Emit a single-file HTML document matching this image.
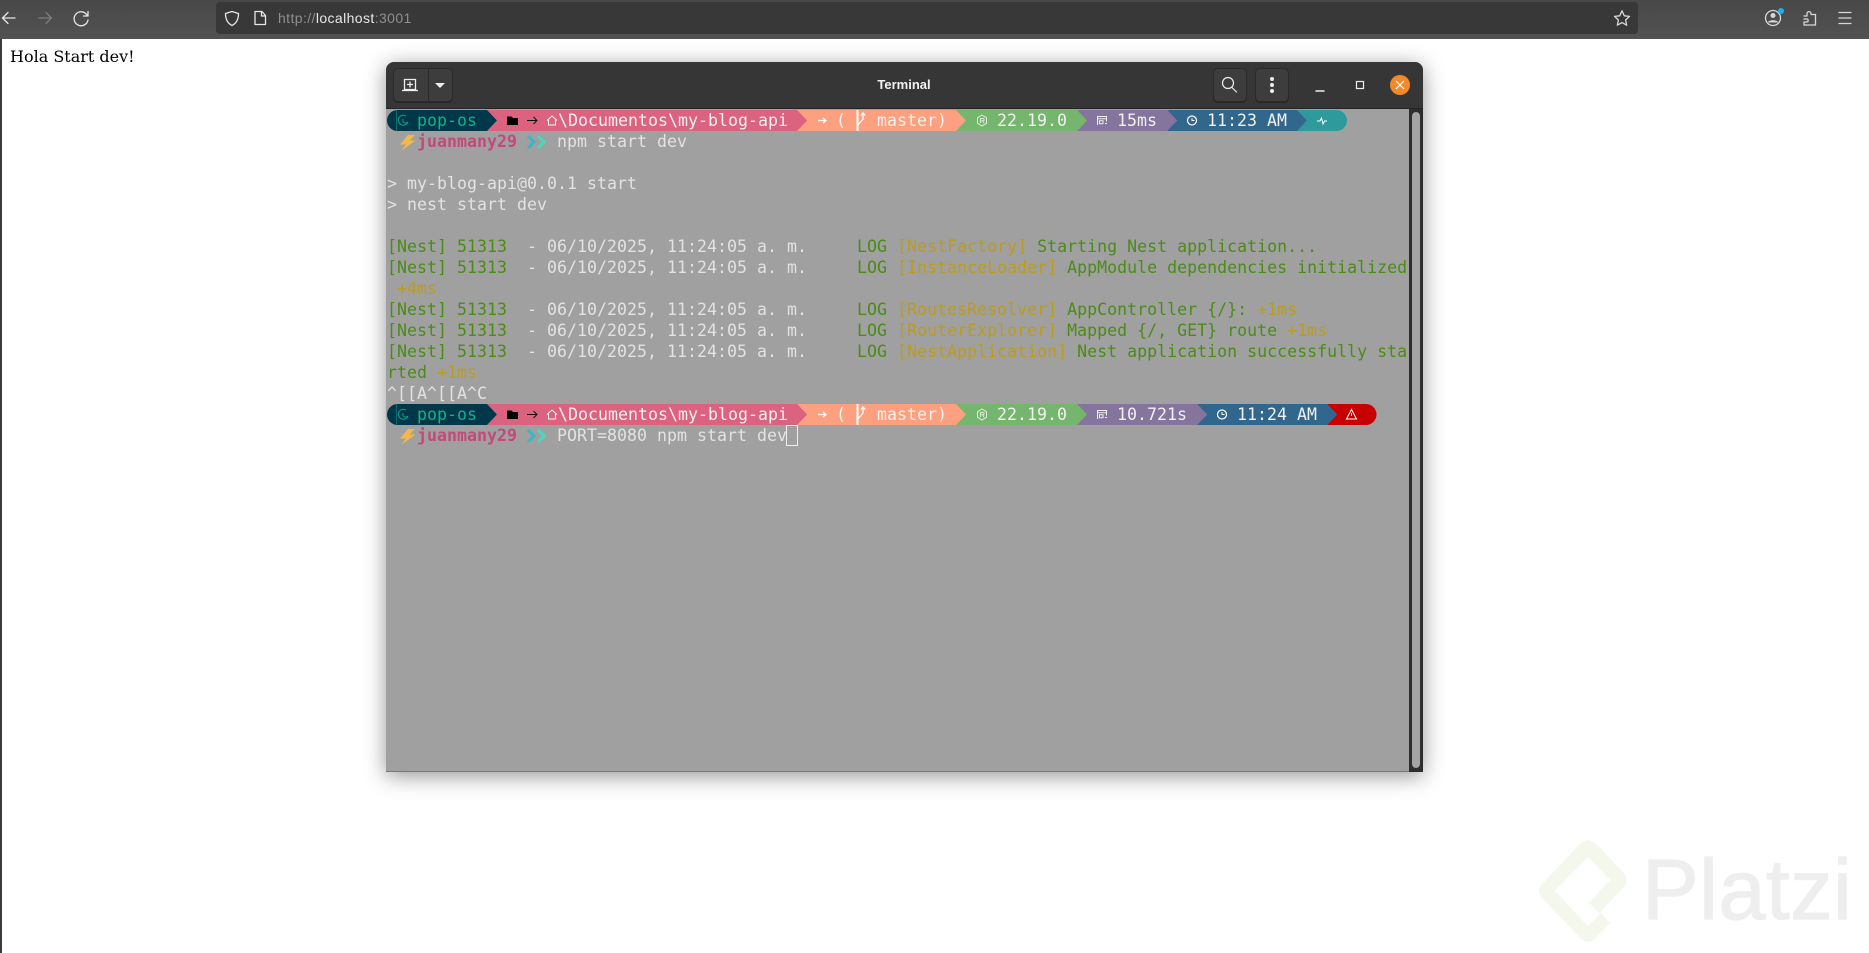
<!DOCTYPE html>
<html><head><meta charset="utf-8"><title>Hola Start dev</title>
<style>
html,body{margin:0;padding:0;width:1869px;height:953px;overflow:hidden;background:#fff}
#top{position:absolute;left:0;top:0;width:1869px;height:39px;background:linear-gradient(#484848,#525252)}
#url{position:absolute;left:216px;top:2px;width:1422px;height:32px;background:#383838;border-radius:4px}
#urlt{position:absolute;left:278px;top:9px;font:14px/18px "Liberation Sans",sans-serif;letter-spacing:.4px;color:#8f8f8f;white-space:pre}
#urlt b{font-weight:400;color:#e8e8e8}
#strip{position:absolute;left:0;top:39px;width:2px;height:914px;background:#3c3c3c}
#hola{position:absolute;left:10px;top:47px;font:16px/20px "DejaVu Serif",serif;color:#000;white-space:pre}
#win{position:absolute;left:386px;top:62px;width:1037px;height:710px;background:#a0a0a0;border-radius:8px 8px 0 0;box-shadow:0 4px 22px rgba(0,0,0,.42)}
#tb{position:absolute;left:0;top:0;width:1037px;height:46px;background:#363636;border-radius:8px 8px 0 0;border-bottom:1px solid #242424;box-sizing:content-box}
#sb{position:absolute;left:1023px;top:47px;width:14px;height:663px;background:#2e2e2e}
#th{position:absolute;left:3px;top:3px;width:8px;height:656px;background:#a3a3a3;border-radius:4px}
#bot{position:absolute;left:0;top:709px;width:1023px;height:1px;background:#777}
.btn{position:absolute;top:6px;height:34px;box-sizing:border-box;background:#3d3d3d;border:1px solid #2a2a2a;border-radius:5px;box-shadow:0 1px 0 #282828}
#title{position:absolute;left:478px;top:0;width:80px;height:46px;text-align:center;font:bold 13px/45px "Liberation Sans",sans-serif;color:#f2f2f2}
#art{position:absolute;left:0;top:0}
.r{position:absolute;left:387px;height:21px;width:1020px;overflow:hidden;font:16.58px/21px "DejaVu Sans Mono",monospace;letter-spacing:.02px;color:#e2e2e2;white-space:pre}
.g{color:#4a8c16}.y{color:#bc9c1c}
.p{color:#c4487a;font-weight:bold}
.bt{position:absolute;height:21px;font:16.58px/21px "DejaVu Sans Mono",monospace;letter-spacing:.02px;color:#f1f1f1;white-space:pre}
#mark{position:absolute;left:1642px;top:836px;font:85px/110px "Liberation Sans",sans-serif;color:#eeeeee;white-space:pre;letter-spacing:.4px;-webkit-text-stroke:1.2px #eeeeee}
</style></head><body>
<div id="top"></div><div id="url"></div>
<div id="urlt">http://<b>localhost</b>:3001</div>
<div id="strip"></div>
<div id="hola">Hola Start dev!</div>
<div id="mark">Platzi</div>
<svg style="position:absolute;left:0;top:0" width="1869" height="953">
<path fill="#f4f8ec" fill-rule="evenodd" d="M1580 844Q1588 836 1596 844L1623 872Q1631 880 1623 888L1600 912L1610 923L1596 938Q1588 946 1580 938L1543 899Q1535 891 1543 883ZM1588 857L1555 891L1588 926L1600 914L1589 903L1610 880Z"/>
</svg>
<div id="win">
 <div id="tb"></div>
 <div class="btn" style="left:7px;width:60px"></div>
 <div style="position:absolute;left:42px;top:7px;width:1px;height:32px;background:#2a2a2a"></div>
 <div class="btn" style="left:827px;width:34px"></div>
 <div class="btn" style="left:869px;width:34px"></div>
 <div id="title">Terminal</div>
 <div id="sb"><div id="th"></div></div>
 <div id="bot"></div>
</div>
<svg id="art" width="1869" height="953" fill="none">
 <!-- browser icons -->
 <g stroke="#e6e6e6" stroke-width="1.300" stroke-linecap="round" stroke-linejoin="round">
  <path d="M3 18H15M8 12.500L2.500 18L8 23.500"/>
  <path stroke="#7d7d7d" d="M39 18H51M46 12.500L51.500 18L46 23.500"/>
  <path d="M87 15A7 7 0 1 0 88 20M88 11.500V16H83.500"/>
  <path d="M232 11.500L238.500 13.500C238.500 19 237 23 232 25.500C227 23 225.500 19 225.500 13.500Z"/>
  <path d="M255 11.500H262L265.500 15.500V24.500H255ZM261.500 11.500V16H265.500"/>
  <path stroke="#d8d8d8" d="M1622 10.800L1624.300 15.800L1629.500 16.400L1625.600 20L1626.700 25.200L1622 22.600L1617.300 25.200L1618.400 20L1614.500 16.400L1619.700 15.800Z"/>
  <circle cx="1773" cy="18" r="7.500" stroke="#d8d8d8"/>
  <path stroke="#d8d8d8" d="M1804 16H1807V13.500C1807 11 1811 11 1811 13.500V14.500H1815.500V25H1804V22H1807C1808.500 22 1808.500 19 1807 19H1804"/>
  <path stroke="#d8d8d8" d="M1839 12.500H1851M1839 18H1851M1839 23.500H1851"/>
 </g>
 <circle cx="1773" cy="15.500" r="2.500" fill="#d8d8d8"/><path d="M1768 22.500C1768 19.500 1778 19.500 1778 22.500Z" fill="#d8d8d8"/>
 <circle cx="1781" cy="11" r="3" fill="#1bb0ee"/>
 <!-- terminal header icons -->
 <g stroke="#eee" stroke-width="1.300">
  <path d="M404.500 79.500H415.500V89.500H404.500ZM410 81.500V87.500M407 84.500H413"/>
  <path d="M402 90.500H418" stroke-width="1.300"/>
 </g>
 <path d="M435 83H445L440 88Z" fill="#eee"/>
 <g stroke="#eee" stroke-width="1.200" stroke-linecap="round">
  <circle cx="1228" cy="83" r="5.500"/><path d="M1232 87.500L1236.500 92"/>
  <path stroke-width="1.500" d="M1316 91H1324"/>
 </g>
 <circle cx="1272" cy="79" r="2" fill="#eee"/><circle cx="1272" cy="85" r="2" fill="#eee"/><circle cx="1272" cy="91" r="2" fill="#eee"/>
 <rect x="1356.500" y="81.500" width="7" height="7" stroke="#eee" stroke-width="1.200"/>
 <circle cx="1400" cy="85" r="10" fill="#f08a2a"/>
 <path d="M1396 81L1404 89M1404 81L1396 89" stroke="#fff" stroke-width="1.200"/>
 <!-- powerline bar 1 -->
 <g id="b1">
  <path fill="#2f9a9c" d="M1297 110H1336.500A10.500 10.500 0 0 1 1336.500 131H1297L1307 120.500Z"/>
  <path fill="#31668d" d="M1167 110H1297L1307 120.500L1297 131H1167L1177 120.500Z"/>
  <path fill="#84749e" d="M1077 110H1167L1177 120.500L1167 131H1077L1087 120.500Z"/>
  <path fill="#75b56d" d="M956 110H1077L1087 120.500L1077 131H956L966 120.500Z"/>
  <path fill="#fda07f" d="M797 110H956L966 120.500L956 131H797L807 120.500Z"/>
  <path fill="#dc6380" d="M487 110H797L807 120.500L797 131H487L497 120.500Z"/>
  <path fill="#00384a" d="M397.500 110H487L497 120.500L487 131H397.500A10.500 10.500 0 0 1 397.500 110Z"/>
 </g>
 <!-- powerline bar 2 -->
 <g id="b2">
  <path fill="#c80000" d="M1327 404H1366A10.500 10.500 0 0 1 1366 425H1327L1337 414.500Z"/>
  <path fill="#31668d" d="M1197 404H1327L1337 414.500L1327 425H1197L1207 414.500Z"/>
  <path fill="#84749e" d="M1077 404H1197L1207 414.500L1197 425H1077L1087 414.500Z"/>
  <path fill="#75b56d" d="M956 404H1077L1087 414.500L1077 425H956L966 414.500Z"/>
  <path fill="#fda07f" d="M797 404H956L966 414.500L956 425H797L807 414.500Z"/>
  <path fill="#dc6380" d="M487 404H797L807 414.500L797 425H487L497 414.500Z"/>
  <path fill="#00384a" d="M397.500 404H487L497 414.500L487 425H397.500A10.500 10.500 0 0 1 397.500 404Z"/>
 </g>
 <g id="ic1">
  <path stroke="#0d6a70" d="M396.500 110V131"/>
  <path stroke="#12a98a" stroke-width=".9" d="M406 116A5 5 0 1 0 408 122C406.500 124 402 123 403 119"/>
  <path fill="#000" d="M507 116.500H511.500L513 118H518V125H507Z"/>
  <path stroke="#111" stroke-width="1" d="M527 120.500H537M533.500 117L537 120.500L533.500 124"/>
  <path stroke="#f3f3f3" stroke-width="1" d="M547 120.500L552 116L557 120.500M548.500 120V125H555.500V120"/>
  <path stroke="#fff" stroke-width="1.200" d="M818 120.500H826M823 118L826 120.500L823 123"/>
  <path stroke="#fff" stroke-width="2" d="M857.500 110V131"/><path stroke="#fff" stroke-width="1.300" d="M858 125L863 119V113.500M860.800 115.500L863 113L865.200 115.500"/>
  <path stroke="#dff0dc" d="M982 115L986.500 117.800V123.200L982 126L977.500 123.200V117.800Z"/><path stroke="#dff0dc" stroke-width=".9" d="M980.500 123V118.500H983C984.500 118.500 984.500 120.800 983 120.800H980.500M983 121L984 123"/>
  <path stroke="#eee" d="M1097.500 125V116.500H1106.500V121.500M1097.500 118.800H1106.500M1099.500 120.800H1103V123.800H1099.500ZM1105 123.500H1107"/>
  <circle cx="1192" cy="120.500" r="4.500" stroke="#fff" stroke-width="1.200"/><path stroke="#fff" d="M1192 118V120.500H1194.500"/>
  <path stroke="#fff" d="M1317 121H1320L1321.500 118L1323 124L1324.500 121H1327"/>
 </g>
 <g id="ic2">
  <path stroke="#0d6a70" d="M396.500 404V425"/>
  <path stroke="#12a98a" stroke-width=".9" d="M406 410A5 5 0 1 0 408 416C406.500 418 402 417 403 413"/>
  <path fill="#000" d="M507 410.500H511.500L513 412H518V419H507Z"/>
  <path stroke="#111" stroke-width="1" d="M527 414.500H537M533.500 411L537 414.500L533.500 418"/>
  <path stroke="#f3f3f3" stroke-width="1" d="M547 414.500L552 410L557 414.500M548.500 414V419H555.500V414"/>
  <path stroke="#fff" stroke-width="1.200" d="M818 414.500H826M823 412L826 414.500L823 417"/>
  <path stroke="#fff" stroke-width="2" d="M857.500 404V425"/><path stroke="#fff" stroke-width="1.300" d="M858 419L863 413V407.500M860.800 409.500L863 407L865.200 409.500"/>
  <path stroke="#dff0dc" d="M982 409L986.500 411.800V417.200L982 420L977.500 417.200V411.800Z"/><path stroke="#dff0dc" stroke-width=".9" d="M980.500 417V412.500H983C984.500 412.500 984.500 414.800 983 414.800H980.500M983 415L984 417"/>
  <path stroke="#eee" d="M1097.500 419V410.500H1106.500V415.500M1097.500 412.800H1106.500M1099.500 414.800H1103V417.800H1099.500ZM1105 417.500H1107"/>
  <circle cx="1222" cy="414.500" r="4.500" stroke="#fff" stroke-width="1.200"/><path stroke="#fff" d="M1222 412V414.500H1224.500"/>
  <path stroke="#fff" d="M1351.500 409.500L1356.500 419H1346.500Z"/><path stroke="#fff" d="M1351.500 413V416"/>
 </g>
 <path fill="#f2b84a" d="M408 135H415L409.500 140.500H415.500L401 151L406 144.500H400Z"/>
 <path fill="#f2b84a" d="M408 429H415L409.500 434.500H415.500L401 445L406 438.500H400Z"/>
 <g stroke-width="3">
  <path stroke="#3db5c8" d="M528 136L534 142L528 148"/><path stroke="#47d8be" d="M538 136L544 142L538 148"/>
  <path stroke="#3db5c8" d="M528 430L534 436L528 442"/><path stroke="#47d8be" d="M538 430L544 436L538 442"/>
 </g>
 <rect x="786.500" y="425.500" width="11" height="20" stroke="#f0f0f0"/>
</svg>
<!-- bar text -->
<div class="bt" style="left:417px;top:110px;color:#0cb38c">pop-os</div>
<div class="bt" style="left:558px;top:110px">\Documentos\my-blog-api</div>
<div class="bt" style="left:836px;top:110px">(</div>
<div class="bt" style="left:877px;top:110px">master)</div>
<div class="bt" style="left:997px;top:110px">22.19.0</div>
<div class="bt" style="left:1117px;top:110px">15ms</div>
<div class="bt" style="left:1207px;top:110px">11:23 AM</div>
<div class="bt" style="left:417px;top:404px;color:#0cb38c">pop-os</div>
<div class="bt" style="left:558px;top:404px">\Documentos\my-blog-api</div>
<div class="bt" style="left:836px;top:404px">(</div>
<div class="bt" style="left:877px;top:404px">master)</div>
<div class="bt" style="left:997px;top:404px">22.19.0</div>
<div class="bt" style="left:1117px;top:404px">10.721s</div>
<div class="bt" style="left:1237px;top:404px">11:24 AM</div>
<!-- rows -->
<div class="r" style="top:131px">   <span class="p">juanmany29</span>    npm start dev</div>
<div class="r" style="top:173px">&gt; my-blog-api@0.0.1 start</div>
<div class="r" style="top:194px">&gt; nest start dev</div>
<div class="r" style="top:236px"><span class="g">[Nest] 51313  </span>- 06/10/2025, 11:24:05 a. m.     <span class="g">LOG </span><span class="y">[NestFactory] </span><span class="g">Starting Nest application...</span></div>
<div class="r" style="top:257px"><span class="g">[Nest] 51313  </span>- 06/10/2025, 11:24:05 a. m.     <span class="g">LOG </span><span class="y">[InstanceLoader] </span><span class="g">AppModule dependencies initialized</span></div>
<div class="r" style="top:278px"> <span class="y">+4ms</span></div>
<div class="r" style="top:299px"><span class="g">[Nest] 51313  </span>- 06/10/2025, 11:24:05 a. m.     <span class="g">LOG </span><span class="y">[RoutesResolver] </span><span class="g">AppController {/}: </span><span class="y">+1ms</span></div>
<div class="r" style="top:320px"><span class="g">[Nest] 51313  </span>- 06/10/2025, 11:24:05 a. m.     <span class="g">LOG </span><span class="y">[RouterExplorer] </span><span class="g">Mapped {/, GET} route </span><span class="y">+1ms</span></div>
<div class="r" style="top:341px"><span class="g">[Nest] 51313  </span>- 06/10/2025, 11:24:05 a. m.     <span class="g">LOG </span><span class="y">[NestApplication] </span><span class="g">Nest application successfully sta</span></div>
<div class="r" style="top:362px"><span class="g">rted </span><span class="y">+1ms</span></div>
<div class="r" style="top:383px">^[[A^[[A^C</div>
<div class="r" style="top:425px">   <span class="p">juanmany29</span>    PORT=8080 npm start dev</div>
</body></html>
